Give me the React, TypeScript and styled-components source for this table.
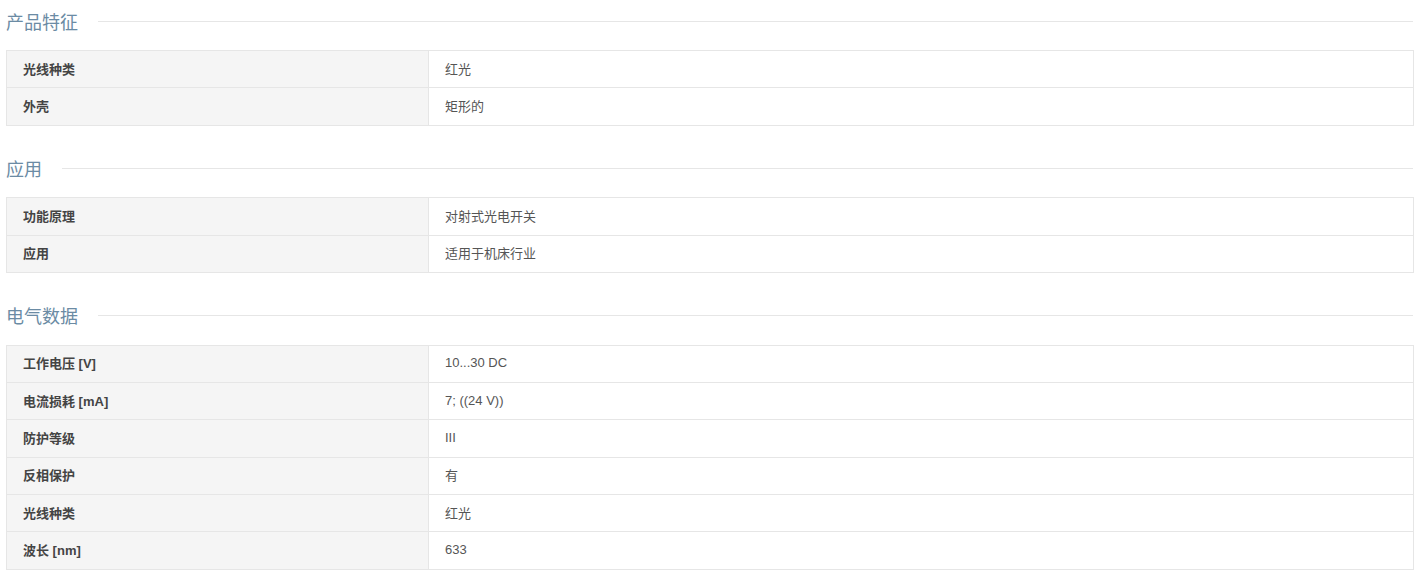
import styled, { createGlobalStyle } from "styled-components";

const GlobalStyle = createGlobalStyle`
  html, body {
    margin: 0;
    padding: 0;
    background: #ffffff;
  }
  body {
    font-family: "Liberation Sans", Arial, "Noto Sans CJK SC", sans-serif;
  }
`;

type Row = { label: string; value: string };
type Section = { title: string; rows: Row[] };

const sections: Section[] = [
  {
    title: "产品特征",
    rows: [
      { label: "光线种类", value: "红光" },
      { label: "外壳", value: "矩形的" },
    ],
  },
  {
    title: "应用",
    rows: [
      { label: "功能原理", value: "对射式光电开关" },
      { label: "应用", value: "适用于机床行业" },
    ],
  },
  {
    title: "电气数据",
    rows: [
      { label: "工作电压 [V]", value: "10...30 DC" },
      { label: "电流损耗 [mA]", value: "7; ((24 V))" },
      { label: "防护等级", value: "III" },
      { label: "反相保护", value: "有" },
      { label: "光线种类", value: "红光" },
      { label: "波长 [nm]", value: "633" },
    ],
  },
];

const App = () => {
  return (
    <Page>
      <GlobalStyle />
      {sections.map((section) => (
        <SectionBlock key={section.title}>
          <Heading>
            <HeadingText>{section.title}</HeadingText>
            <HeadingLine />
          </Heading>
          <SpecTable>
            <tbody>
              {section.rows.map((row, i) => (
                <tr key={i}>
                  <LabelCell>{row.label}</LabelCell>
                  <ValueCell>{row.value}</ValueCell>
                </tr>
              ))}
            </tbody>
          </SpecTable>
        </SectionBlock>
      ))}
    </Page>
  );
};

const Page = styled.div`
  padding: 10px 6px 0;
  display: flex;
  flex-direction: column;
  gap: 31.67px;
`;

const SectionBlock = styled.section`
  display: flex;
  flex-direction: column;
  gap: 16px;
`;

const Heading = styled.div`
  display: flex;
  align-items: center;
  gap: 20px;
  height: 24px;
`;

const HeadingText = styled.h3`
  margin: 0 0 3px;
  font-size: 18px;
  font-weight: normal;
  line-height: 24px;
  color: #6b8ba4;
  font-family: "Microsoft YaHei", "Noto Sans CJK SC", sans-serif;
  white-space: nowrap;
`;

const HeadingLine = styled.div`
  flex: 1;
  height: 1px;
  background: #e6e6e6;
  margin-top: -2px;
  margin-right: 1px;
`;

const SpecTable = styled.table`
  width: 100%;
  border-collapse: collapse;
  font-size: 13px;
  table-layout: fixed;
`;

const LabelCell = styled.td`
  width: 422px;
  height: 37.333px;
  box-sizing: border-box;
  padding: 0 16px 2px;
  background: #f5f5f5;
  border: 1px solid #e6e6e6;
  font-weight: bold;
  color: #444444;
  font-family: "Liberation Sans", Arial, "Noto Sans CJK SC", sans-serif;
`;

const ValueCell = styled.td`
  height: 37.333px;
  box-sizing: border-box;
  padding: 0 16px 2px;
  background: #ffffff;
  border: 1px solid #e6e6e6;
  color: #555555;
  font-family: "Liberation Sans", Arial, "Noto Sans CJK SC", sans-serif;
`;

export default App;
